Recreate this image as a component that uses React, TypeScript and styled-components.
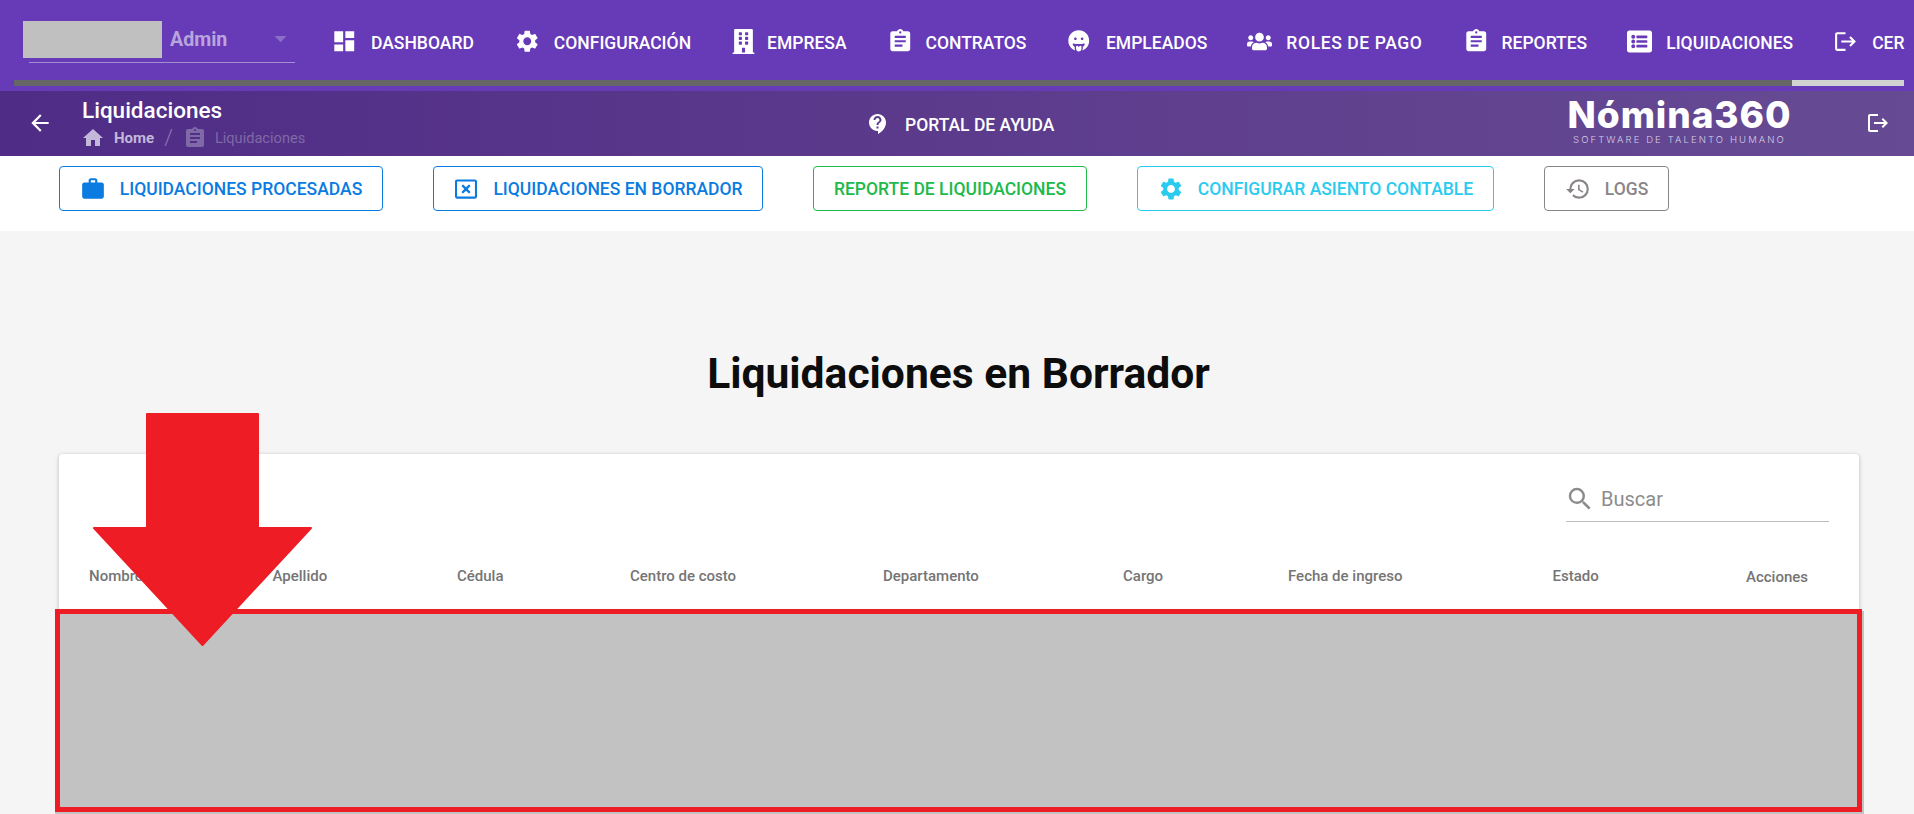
import { ReactNode } from 'react';
import styled, { createGlobalStyle } from 'styled-components';
import {
    MdArrowBack,
    MdArrowDropDown,
    MdAssignment,
    MdContactSupport,
    MdDashboard,
    MdHistory,
    MdHome,
    MdLogout,
    MdSearch,
    MdSettings,
    MdWork,
} from 'react-icons/md';
import { FaBuilding, FaGrinTongue, FaListAlt, FaRegWindowClose, FaUsers } from 'react-icons/fa';

const GlobalStyle = createGlobalStyle`
    html, body {
        margin: 0;
        padding: 0;
        height: 100%;
        overflow: hidden;
        background: #f5f5f5;
        font-family: Roboto, "Liberation Sans", sans-serif;
    }
    * {
        box-sizing: border-box;
    }
`;

const Page = styled.div`
    position: relative;
    width: 1914px;
    height: 814px;
    overflow: hidden;
`;

const TopBar = styled.header`
    height: 91px;
    background: #673ab7;
    display: flex;
    flex-flow: column;
`;

const TopRow = styled.div`
    height: 80px;
    display: flex;
    align-items: flex-start;
`;

const UserBox = styled.div`
    width: 331px;
    flex: none;
    padding: 21px 0 0 23px;
`;

const UserSelect = styled.div`
    width: 272px;
    height: 42px;
    display: flex;
    position: relative;
    &::after {
        content: '';
        position: absolute;
        left: 6px;
        right: 0;
        bottom: 0;
        border-bottom: 1px solid #a48ed3;
    }
`;

const UserBlur = styled.div`
    width: 139px;
    height: 37px;
    background: #c0c0c0;
`;

const UserName = styled.span`
    margin: 7px 0 0 8px;
    width: 96px;
    font-size: 19.6px;
    line-height: 24px;
    font-weight: 700;
    color: #b9a5dd;
`;

const CaretSlot = styled.span`
    margin-top: 3px;
    color: #8a6fc8;
    line-height: 0;
    height: 29px;
`;

const Nav = styled.nav`
    flex: 1;
    min-width: 0;
    display: flex;
    align-items: center;
    gap: 40px;
    margin-right: 9px;
    padding-top: 28px;
    height: 58px;
    overflow: hidden;
`;

const NavItem = styled.a<{ $track?: number }>`
    display: flex;
    flex: none;
    align-items: center;
    height: 26px;
    color: #fff;
    font-size: 17.5px;
    font-weight: 500;
    letter-spacing: ${(p) => p.$track ?? 0}px;
    white-space: nowrap;
`;

const NavIcon = styled.span<{ $slot?: number; $inset?: number }>`
    width: ${(p) => p.$slot ?? 39}px;
    height: 28px;
    margin-bottom: 4px;
    padding-left: ${(p) => p.$inset ?? 0}px;
    display: flex;
    align-items: center;
    svg {
        display: block;
    }
`;

const ProgressTrack = styled.div`
    height: 6px;
    margin: 0 10px 0 14px;
    background: #666666;
    display: flex;
    justify-content: flex-end;
`;

const ProgressThumb = styled.div`
    width: 112px;
    background: #d2d2d2;
`;

const SubBar = styled.div`
    height: 65px;
    display: grid;
    grid-template-columns: 82px 784px 703px 1fr;
    align-items: center;
    color: #fff;
    background: linear-gradient(90deg, #4f2c86 0%, #5c3b8c 50%, #664b94 100%);
`;

const BackButton = styled.div`
    padding: 0 0 2px 27px;
    svg {
        display: block;
    }
`;

const Heading = styled.div`
    display: flex;
    flex-flow: column;
`;

const HeadingTitle = styled.div`
    font-size: 22.5px;
    font-weight: 500;
    line-height: 24px;
`;

const Crumbs = styled.div`
    display: flex;
    align-items: center;
    height: 24px;
    margin: 4px 0 0 -1px;
    font-size: 15px;
`;

const CrumbLink = styled.span`
    display: flex;
    align-items: center;
    gap: 9px;
    color: #c3b8da;
    font-weight: 700;
`;

const CrumbSlash = styled.span`
    margin: 0 10px;
    font-size: 22px;
    font-weight: 300;
    color: #8d78b0;
`;

const CrumbCurrent = styled.span`
    display: flex;
    align-items: center;
    gap: 8px;
    font-size: 14.6px;
    color: #7f69a6;
`;

const HelpLink = styled.div`
    display: flex;
    align-items: center;
    gap: 15px;
    padding-top: 3px;
    font-size: 17.5px;
    font-weight: 500;
    svg {
        display: block;
        margin-bottom: 3px;
    }
`;

const Logo = styled.div`
    width: 221px;
    padding-bottom: 3px;
    display: flex;
    flex-flow: column;
    align-items: center;
`;

const LogoName = styled.div`
    font-family: Inter, sans-serif;
    font-size: 37px;
    font-weight: 800;
    line-height: 32px;
    letter-spacing: 0.9px;
    white-space: nowrap;
`;

const LogoTag = styled.div`
    font-family: Inter, sans-serif;
    font-size: 9.5px;
    line-height: 12px;
    letter-spacing: 2.1px;
    font-weight: 300;
    color: #d6cfe4;
    margin-top: 3px;
    white-space: nowrap;
`;

const SubBarRight = styled.div`
    display: flex;
    align-items: center;
    justify-content: space-between;
    padding-right: 24px;
    svg {
        display: block;
        margin-bottom: 2px;
    }
`;

const ActionBar = styled.div`
    height: 75px;
    padding: 10px 0 0 59px;
    display: flex;
    gap: 50px;
    align-items: flex-start;
    background: #fff;
`;

const ActionButton = styled.button<{ $color: string; $width: number }>`
    display: flex;
    align-items: center;
    justify-content: center;
    gap: 14px;
    height: 45px;
    width: ${(p) => p.$width}px;
    padding: 0;
    background: transparent;
    border: 1px solid ${(p) => p.$color};
    border-radius: 4px;
    color: ${(p) => p.$color};
    font-family: inherit;
    font-size: 17.5px;
    font-weight: 500;
    white-space: nowrap;
    svg {
        display: block;
    }
`;

const DraftIcon = styled(FaRegWindowClose)`
    margin: 0 2px;
`;

const PageTitle = styled.h1`
    margin: 0;
    padding: 119px 0 0 3px;
    height: 223px;
    text-align: center;
    color: #0d0d0d;
    font-size: 42.6px;
    line-height: 46px;
    font-weight: 700;
`;

const Card = styled.section`
    margin: 0 0 0 59px;
    width: 1800px;
    background: #fff;
    border-radius: 4px;
    box-shadow: 0 1px 4px rgba(0, 0, 0, 0.25);
`;

const SearchRow = styled.div`
    height: 68px;
    padding: 22px 30px 0 0;
    display: flex;
    justify-content: flex-end;
`;

const SearchField = styled.div`
    width: 263px;
    height: 46px;
    display: flex;
    align-items: flex-start;
    gap: 6px;
    padding-top: 11px;
    border-bottom: 1px solid #bdbdbd;
    color: #8c8c8c;
    font-size: 20px;
    line-height: 24px;
    svg {
        display: block;
        margin: -3px 0 0 -1px;
    }
`;

const HeadRow = styled.div`
    height: 87px;
    padding: 20px 0 0 30px;
    display: grid;
    grid-template-columns: 183.5px 184.5px 173px 253px 240px 165px 264.5px 193.5px 1fr;
    align-items: center;
`;

const HeadCell = styled.div<{ $low?: boolean }>`
    font-size: 15px;
    font-weight: 500;
    color: #757575;
    padding-top: ${(p) => (p.$low ? 2 : 0)}px;
    white-space: nowrap;
`;

const RedactedArea = styled.div`
    height: 205px;
    margin: 2px -5px 0 -4px;
    padding-right: 2px;
    background: #c2c2c2;
`;

const RedactedRows = styled.div`
    height: 203px;
    position: relative;
    top: -2px;
    background: #c2c2c2;
    border: 5px solid #ee1c25;
`;

const ArrowMark = styled.svg`
    position: absolute;
    left: 93px;
    top: 413px;
`;

const navItems: { label: string; icon: ReactNode; slot?: number; inset?: number; track?: number }[] = [
    { label: 'DASHBOARD', icon: <MdDashboard size={26.5} />, slot: 40 },
    { label: 'CONFIGURACIÓN', icon: <MdSettings size={26.5} />, slot: 40 },
    { label: 'EMPRESA', icon: <FaBuilding size={25} />, slot: 36 },
    { label: 'CONTRATOS', icon: <MdAssignment size={26.5} /> },
    { label: 'EMPLEADOS', icon: <FaGrinTongue size={21.5} />, slot: 39.5, inset: 2 },
    { label: 'ROLES DE PAGO', icon: <FaUsers size={25} />, track: 0.6 },
    { label: 'REPORTES', icon: <MdAssignment size={26.5} /> },
    { label: 'LIQUIDACIONES', icon: <FaListAlt size={25} /> },
    { label: 'CERRAR SESIÓN', icon: <MdLogout size={25} />, slot: 39 },
];

const columns = ['Nombre', 'Apellido', 'Cédula', 'Centro de costo', 'Departamento', 'Cargo', 'Fecha de ingreso', 'Estado'];

const App = () => {
    return (
        <>
            <GlobalStyle />
            <Page>
                <TopBar>
                    <TopRow>
                        <UserBox>
                            <UserSelect>
                                <UserBlur />
                                <UserName>Admin</UserName>
                                <CaretSlot>
                                    <MdArrowDropDown size={29} />
                                </CaretSlot>
                            </UserSelect>
                        </UserBox>
                        <Nav>
                            {navItems.map((item) => (
                                <NavItem key={item.label} $track={item.track}>
                                    <NavIcon $slot={item.slot} $inset={item.inset}>
                                        {item.icon}
                                    </NavIcon>
                                    {item.label}
                                </NavItem>
                            ))}
                        </Nav>
                    </TopRow>
                    <ProgressTrack>
                        <ProgressThumb />
                    </ProgressTrack>
                </TopBar>
                <SubBar>
                    <BackButton>
                        <MdArrowBack size={26} />
                    </BackButton>
                    <Heading>
                        <HeadingTitle>Liquidaciones</HeadingTitle>
                        <Crumbs>
                            <CrumbLink>
                                <MdHome size={24} />
                                Home
                            </CrumbLink>
                            <CrumbSlash>/</CrumbSlash>
                            <CrumbCurrent>
                                <MdAssignment size={24} />
                                Liquidaciones
                            </CrumbCurrent>
                        </Crumbs>
                    </Heading>
                    <HelpLink>
                        <MdContactSupport size={24} />
                        PORTAL DE AYUDA
                    </HelpLink>
                    <SubBarRight>
                        <Logo>
                            <LogoName>Nómina360</LogoName>
                            <LogoTag>SOFTWARE DE TALENTO HUMANO</LogoTag>
                        </Logo>
                        <MdLogout size={24} />
                    </SubBarRight>
                </SubBar>
                <ActionBar>
                    <ActionButton $color="#0a7be0" $width={324}>
                        <MdWork size={26} />
                        LIQUIDACIONES PROCESADAS
                    </ActionButton>
                    <ActionButton $color="#0a7be0" $width={330}>
                        <DraftIcon size={22} />
                        LIQUIDACIONES EN BORRADOR
                    </ActionButton>
                    <ActionButton $color="#20b94a" $width={274}>
                        REPORTE DE LIQUIDACIONES
                    </ActionButton>
                    <ActionButton $color="#2bcbef" $width={357}>
                        <MdSettings size={26} />
                        CONFIGURAR ASIENTO CONTABLE
                    </ActionButton>
                    <ActionButton $color="#8a8488" $width={125}>
                        <MdHistory size={26} />
                        LOGS
                    </ActionButton>
                </ActionBar>
                <PageTitle>Liquidaciones en Borrador</PageTitle>
                <Card>
                    <SearchRow>
                        <SearchField>
                            <MdSearch size={30} />
                            Buscar
                        </SearchField>
                    </SearchRow>
                    <HeadRow>
                        {columns.map((name) => (
                            <HeadCell key={name}>{name}</HeadCell>
                        ))}
                        <HeadCell $low>Acciones</HeadCell>
                    </HeadRow>
                    <RedactedArea>
                        <RedactedRows />
                    </RedactedArea>
                </Card>
                <ArrowMark width="219" height="233" viewBox="0 0 219 233">
                    <path
                        d="M54 1 H165 V115 H218 L109.5 232 L1 115 H54 Z"
                        fill="#ee1c25"
                        stroke="#ee1c25"
                        strokeWidth="2"
                        strokeLinejoin="round"
                    />
                </ArrowMark>
            </Page>
        </>
    );
};

export default App;
